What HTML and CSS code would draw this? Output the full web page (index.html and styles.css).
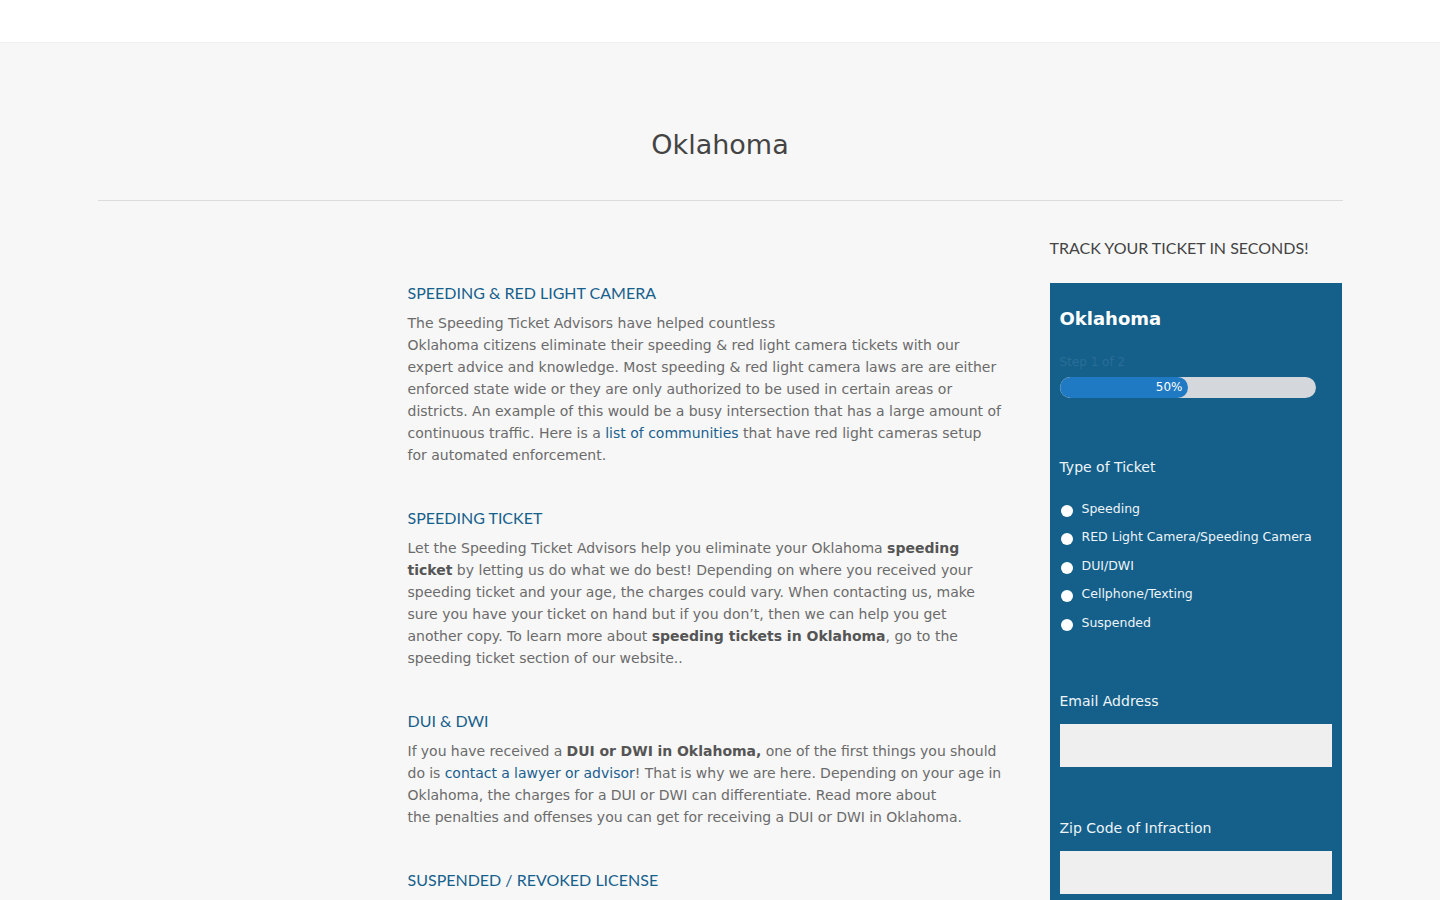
FILE: index.html
```html
<!DOCTYPE html>
<html lang="en">
<head>
<meta charset="utf-8">
<title>Oklahoma</title>
<link rel="stylesheet" href="styles.css">
</head>
<body>
<header class="topbar"></header>
<div class="page">
  <h1 class="page-title">Oklahoma</h1>
  <hr class="rule">
  <div class="layout">
    <aside class="left-col"></aside>
    <main class="content">
      <section class="block">
        <h2 class="block-title">SPEEDING &amp; RED LIGHT CAMERA</h2>
        <p class="block-text">The Speeding Ticket Advisors have helped countless<br>Oklahoma citizens eliminate their speeding &amp; red light camera tickets with our expert advice and knowledge. Most speeding &amp; red light camera laws are are either enforced state wide or they are only authorized to be used in certain areas or districts. An example of this would be a busy intersection that has a large amount of continuous traffic. Here is a <a href="#">list of communities</a> that have red light cameras setup for automated enforcement.</p>
      </section>
      <section class="block">
        <h2 class="block-title">SPEEDING TICKET</h2>
        <p class="block-text">Let the Speeding Ticket Advisors help you eliminate your Oklahoma <strong>speeding ticket</strong> by letting us do what we do best! Depending on where you received your speeding ticket and your age, the charges could vary. When contacting us, make sure you have your ticket on hand but if you don’t, then we can help you get another copy. To learn more about <strong>speeding tickets in Oklahoma</strong>, go to the speeding ticket section of our website..</p>
      </section>
      <section class="block">
        <h2 class="block-title">DUI &amp; DWI</h2>
        <p class="block-text block-text-tight">If you have received a <strong>DUI or DWI in Oklahoma,</strong> one of the first things you should do is <a href="#">contact a lawyer or advisor</a>! That is why we are here. Depending on your age in Oklahoma, the charges for a DUI or DWI can differentiate. Read more about<br>the penalties and offenses you can get for receiving a DUI or DWI in Oklahoma.</p>
      </section>
      <section class="block">
        <h2 class="block-title">SUSPENDED / REVOKED LICENSE</h2>
      </section>
    </main>
    <aside class="sidebar">
      <h3 class="side-title">TRACK YOUR TICKET IN SECONDS!</h3>
      <form class="form-box">
        <div class="form-state">Oklahoma</div>
        <div class="step">Step 1 of 2</div>
        <div class="progress"><div class="progress-fill" style="width:50%">50%</div></div>
        <div class="field-label ticket-label">Type of Ticket</div>
        <ul class="radios">
          <li class="radio-item"><span class="radio-dot"></span>Speeding</li>
          <li class="radio-item"><span class="radio-dot"></span>RED Light Camera/Speeding Camera</li>
          <li class="radio-item"><span class="radio-dot"></span>DUI/DWI</li>
          <li class="radio-item"><span class="radio-dot"></span>Cellphone/Texting</li>
          <li class="radio-item"><span class="radio-dot"></span>Suspended</li>
        </ul>
        <div class="field-label email-label">Email Address</div>
        <div class="input"></div>
        <div class="field-label zip-label">Zip Code of Infraction</div>
        <div class="input"></div>
      </form>
    </aside>
  </div>
</div>
</body>
</html>
```
FILE: styles.css
```css
* { box-sizing: border-box; }
html, body { margin: 0; padding: 0; }
body {
  background: #f7f7f7;
  font-family: "DejaVu Sans", Verdana, sans-serif;
  color: #666;
  overflow: hidden;
  height: 900px;
}
.topbar {
  height: 43px;
  background: #fff;
  border-bottom: 1px solid #f0f0f0;
}
.page {
  width: 1245px;
  margin: 0 auto;
}
.page-title {
  margin: 0;
  padding-top: 84px;
  height: 157px;
  font-size: 27px;
  line-height: 36px;
  font-weight: normal;
  color: #444;
  text-align: center;
}
.rule {
  margin: 0;
  border: 0;
  border-top: 1px solid #dcdcdc;
}
.layout {
  display: grid;
  grid-template-columns: 310px 597px 1fr;
}
.sidebar { margin-left: 45px; margin-right: 1px; }
.content { padding-top: 81px; }
.block { margin-bottom: 41px; }
.block-title {
  margin: 0 0 8px;
  font-family: Lato, "Open Sans", sans-serif;
  font-weight: normal;
  font-size: 16px;
  line-height: 22px;
  color: #16608c;
}
.block-text {
  margin: 0;
  font-size: 14px;
  line-height: 22px;
  color: #6b6b6b;
}
.block-text-tight { word-spacing: -0.2px; margin-right: -4px; }
.block-text strong { color: #555; }
.block-text a { color: #1a5f8f; text-decoration: none; }
.sidebar { padding-top: 36px; }
.side-title {
  margin: 0 0 24px;
  font-family: Lato, "Open Sans", sans-serif;
  font-weight: normal;
  font-size: 16px;
  line-height: 22px;
  color: #444;
}
.form-box {
  background: #14608a;
  padding: 24px 10px 10px;
  height: 700px;
}
.form-state {
  color: #fff;
  font-weight: bold;
  font-size: 18px;
  line-height: 24px;
}
.step {
  margin-top: 23px;
  font-size: 12px;
  line-height: 16px;
  color: #2a6d97;
}
.progress {
  margin-top: 7px;
  width: 256px;
  height: 21px;
  border-radius: 11px;
  background: #d4d7db;
  overflow: hidden;
}
.progress-fill {
  height: 100%;
  background: #1f79c3;
  border-radius: 11px;
  color: #fff;
  font-size: 12px;
  line-height: 21px;
  text-align: right;
  padding-right: 5px;
}
.field-label {
  color: #eef4f8;
  font-size: 14px;
  line-height: 20px;
}
.ticket-label { margin-top: 59px; }
.radios {
  list-style: none;
  margin: 17px 0 0;
  padding: 0;
}
.radio-item {
  display: flex;
  align-items: center;
  height: 28.5px;
  font-size: 12.5px;
  color: #eef4f8;
  white-space: nowrap;
}
.radio-dot {
  width: 12px;
  height: 12px;
  border-radius: 50%;
  background: #fff;
  margin-left: 1px;
  margin-right: 9px;
  margin-top: 5px;
  flex: none;
}
.email-label { margin-top: 54px; }
.input {
  margin-top: 13px;
  height: 43px;
  background: #efefef;
}
.zip-label { margin-top: 51px; }
```
